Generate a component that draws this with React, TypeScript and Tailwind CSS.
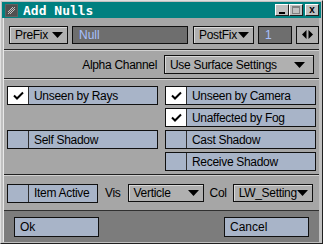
import React from 'react'

const font = { fontFamily: '"Liberation Sans", Arial, sans-serif' }

const Tri: React.FC = () => (
  <svg width="11" height="6" viewBox="0 0 11 6" className="shrink-0">
    <polygon points="0,0 11,0 5.5,6" fill="#000" />
  </svg>
)

const Drop: React.FC<{ label: string; className?: string }> = ({ label, className }) => (
  <div
    className={`flex items-center justify-between whitespace-nowrap border border-[#101010] bg-[#b0b0b0] shadow-[inset_1px_1px_0_#d8d8d8] pl-[5px] pr-[4px] text-[12px] leading-none tracking-[-0.3px] text-black ${className ?? ''}`}
  >
    <span>{label}</span>
    <Tri />
  </div>
)

const Field: React.FC<{ value: string; className?: string }> = ({ value, className }) => (
  <div
    className={`flex items-center border border-[#101010] bg-[#6e6e6e] pl-[6px] text-[12px] leading-none text-[#a8c0ff] ${className ?? ''}`}
  >
    {value}
  </div>
)

const Check: React.FC<{ label: string; checked?: boolean; className?: string }> = ({
  label,
  checked,
  className,
}) => (
  <div
    className={`flex h-[19px] whitespace-nowrap border border-[#101010] bg-[#a8b4c8] text-[12px] leading-none tracking-[-0.3px] text-black ${className ?? ''}`}
  >
    <div
      className={`flex w-[21px] shrink-0 items-center justify-center border-r border-[#303030] ${checked ? 'bg-white' : 'bg-[#a8b4c8]'}`}
    >
      {checked && (
        <svg width="11" height="9" viewBox="0 0 11 9">
          <path d="M1 4.5 L4 7.5 L10 1.5" stroke="#000" strokeWidth="2" fill="none" />
        </svg>
      )}
    </div>
    <div className="flex items-center pl-[5px]">{label}</div>
  </div>
)

const Sep: React.FC = () => <div className="h-[2px] shrink-0 border-t border-[#202020] bg-[#d0d0d0]" />

const TitleBtn: React.FC<{ children: React.ReactNode }> = ({ children }) => (
  <div className="flex h-[12px] w-[14px] items-center justify-center border border-t-white border-l-white border-r-[#202020] border-b-[#202020] bg-[#c0c0c0]">
    {children}
  </div>
)

export default function App() {
  return (
    <div
      className="flex h-[244px] w-[323px] flex-col border border-t-[#e0e0e0] border-l-[#e0e0e0] border-r-[#202020] border-b-[#202020] bg-[#c0c0c0] p-[1px]"
      style={font}
    >
      {/* title bar */}
      <div className="flex h-[16px] shrink-0 items-center bg-[#008080] pl-[3px] pr-[2px]">
        <div className="h-[13px] w-[13px] border border-[#606060] bg-[#505050]">
          <svg width="11" height="11" viewBox="0 0 11 11">
            <path d="M2 9 L9 2 M4 9 L9 4 M2 7 L7 2" stroke="#c0c0c0" strokeWidth="1" />
          </svg>
        </div>
        <div className="ml-[5px] font-['DejaVu_Sans_Mono',monospace] text-[13px] font-bold leading-none text-white">
          Add Nulls
        </div>
        <div className="ml-auto flex items-center">
          <TitleBtn>
            <div className="mt-[5px] h-[2px] w-[6px] bg-black" />
          </TitleBtn>
          <TitleBtn>
            <div className="h-[8px] w-[8px] border border-t-2 border-[#808080]" />
          </TitleBtn>
          <div className="w-[2px]" />
          <TitleBtn>
            <span className="text-[10px] font-bold leading-none text-black">x</span>
          </TitleBtn>
        </div>
      </div>

      {/* content */}
      <div className="ml-[1px] mr-[2px] flex flex-1 flex-col border-l border-[#e8e8e8] bg-[#a6a6a6]">
        <div className="flex h-[31px] shrink-0 items-center gap-[4px] pl-[5px] pt-[2px]">
          <Drop label="PreFix" className="h-[18px] w-[59px]" />
          <Field value="Null" className="h-[18px] w-[116px]" />
          <Drop label="PostFix" className="ml-[1px] h-[18px] w-[61px]" />
          <Field value="1" className="h-[18px] w-[34px]" />
          <div className="flex h-[18px] w-[23px] items-center justify-center border border-[#101010] bg-[#b0b0b0]">
            <svg width="11" height="9" viewBox="0 0 11 9">
              <polygon points="0,4.5 4.5,0 4.5,9" fill="#000" />
              <polygon points="11,4.5 6.5,0 6.5,9" fill="#000" />
            </svg>
          </div>
        </div>
        <Sep />
        <div className="flex h-[27px] shrink-0 items-center justify-end pr-[5px]">
          <span className="mr-[7px] text-[12px] tracking-[-0.3px] text-black">Alpha Channel</span>
          <Drop label="Use Surface Settings" className="h-[19px] w-[150px] pr-[8px]" />
        </div>
        <Sep />
        <div className="flex h-[94px] shrink-0 gap-[7px] px-[3px] pt-[6px]">
          <div className="flex flex-1 flex-col gap-[3px]">
            <Check label="Unseen by Rays" checked />
            <div className="h-[19px]" />
            <Check label="Self Shadow" />
          </div>
          <div className="flex flex-1 flex-col gap-[3px]">
            <Check label="Unseen by Camera" checked />
            <Check label="Unaffected by Fog" checked />
            <Check label="Cast Shadow" />
            <Check label="Receive Shadow" />
          </div>
        </div>
        <Sep />
        <div className="flex h-[34px] shrink-0 items-center whitespace-nowrap pl-[3px] text-[12px] tracking-[-0.3px] text-black">
          <Check label="Item Active" className="h-[18px] w-[91px]" />
          <span className="ml-[7px]">Vis</span>
          <Drop label="Verticle" className="ml-[7px] h-[18px] w-[76px]" />
          <span className="ml-[6px]">Col</span>
          <Drop label="LW_Setting" className="ml-[6px] h-[18px] w-[80px] pl-[4px] pr-[3px]" />
        </div>
        <div className="flex flex-1 items-center justify-between border-t border-[#303030] bg-[#7c7c7c] pl-[10px] pr-[10px]">
          <div className="flex h-[20px] w-[85px] items-center border border-[#101010] bg-[#a8b4c8] pl-[5px] text-[12px] leading-none">
            Ok
          </div>
          <div className="flex h-[20px] w-[85px] items-center border border-[#101010] bg-[#a8b4c8] pl-[5px] text-[12px] leading-none">
            Cancel
          </div>
        </div>
      </div>
    </div>
  )
}
